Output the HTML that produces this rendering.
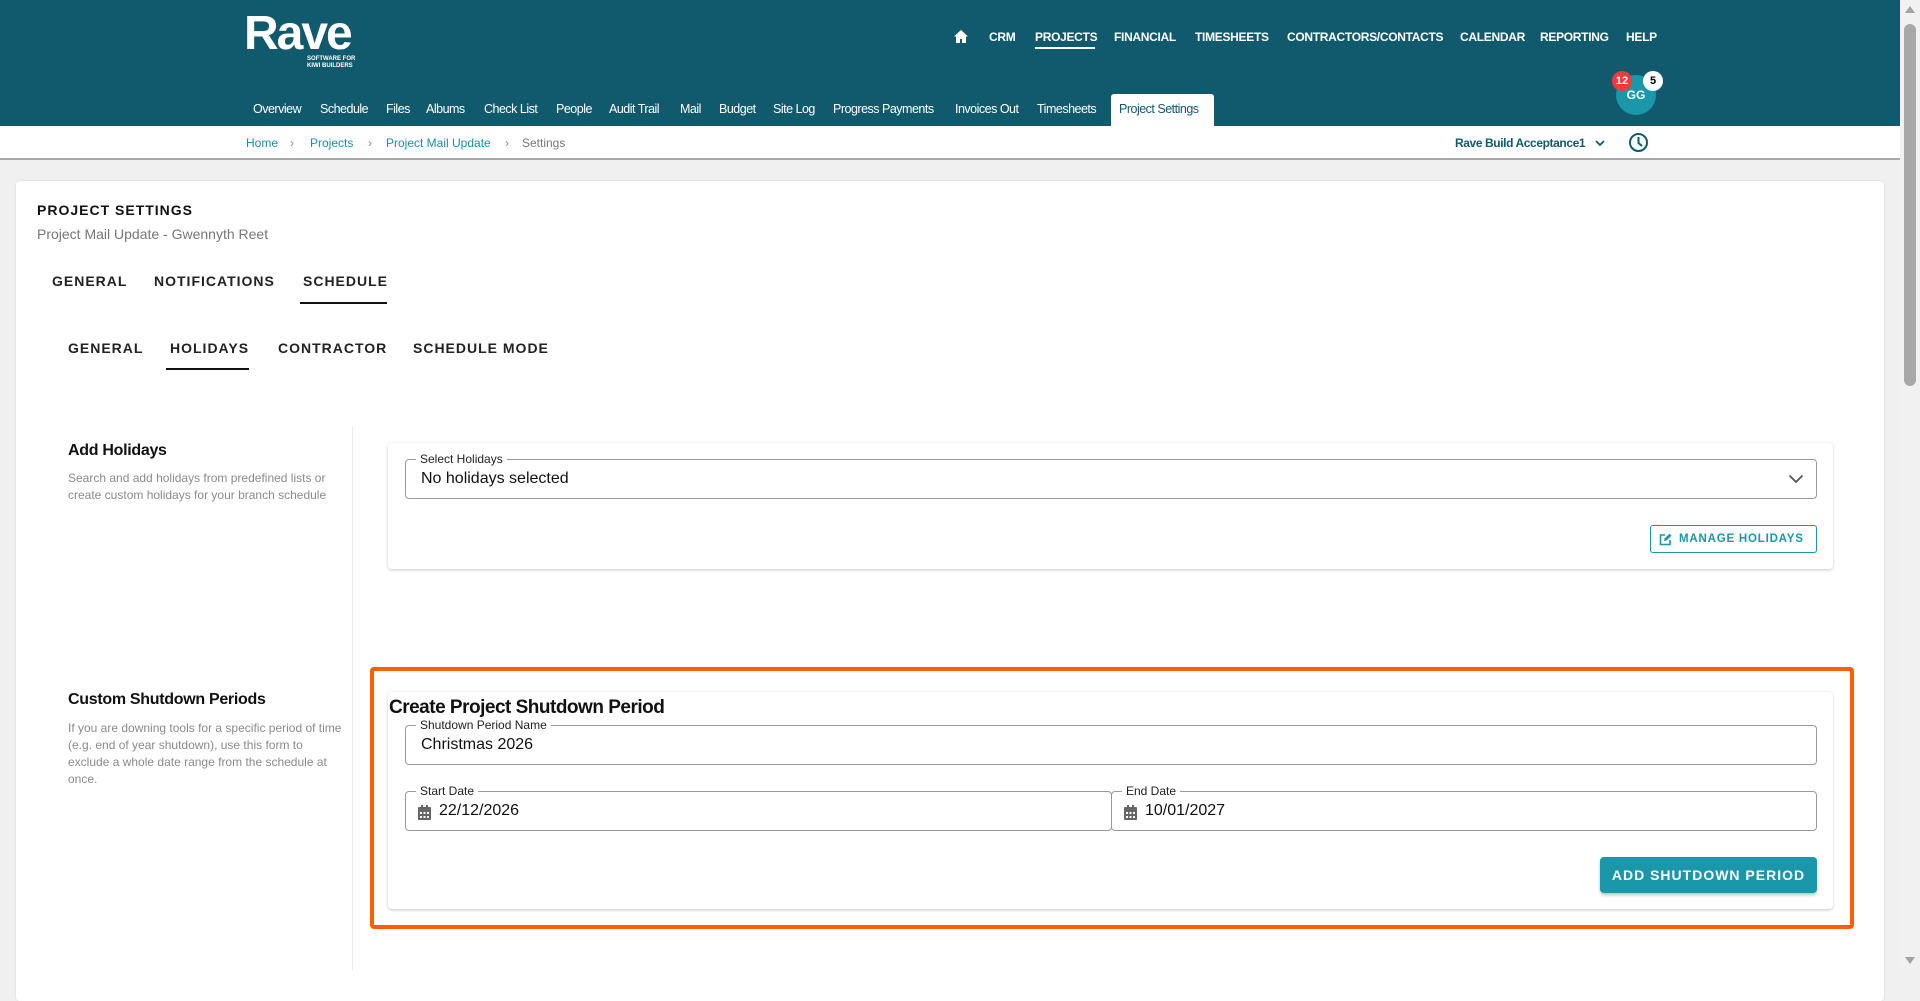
<!DOCTYPE html>
<html><head><meta charset="utf-8"><style>
*{margin:0;padding:0;box-sizing:border-box}
body{width:1920px;height:970px;overflow:hidden;background:#f0f0f0;font-family:"Liberation Sans",Arial,sans-serif;position:relative}
.a{position:absolute;white-space:nowrap}
#hdr{position:absolute;left:0;top:0;width:1900px;height:126px;background:#115a6d}
.tn{position:absolute;top:30px;color:#fff;font-weight:bold;font-size:12px;letter-spacing:-0.3px}
.sn{position:absolute;top:102px;color:#fff;font-size:12.5px;letter-spacing:-0.5px}
#bc{position:absolute;left:0;top:126px;width:1900px;height:34px;background:#fff;border-bottom:2px solid #a8a8a8}
.bcl{position:absolute;top:10px;font-size:12px;color:#1a8fa5}
.card{position:absolute;background:#fff;border-radius:4px;box-shadow:0 1px 3px rgba(0,0,0,.22)}
.tab{position:absolute;font-size:14px;font-weight:bold;letter-spacing:1px;color:#222}
.fld{position:absolute;border:1px solid #9a9a9a;border-radius:4px;background:#fff}
.lbl{position:absolute;top:-8px;left:10px;background:#fff;padding:0 4px;font-size:12px;color:#222;line-height:14px}
.val{position:absolute;left:15px;top:10px;font-size:16px;color:#111}
.desc{font-size:12px;color:#8a8a8a;line-height:17px}
</style></head><body>
<div id="hdr">
 <div class="a" style="left:244px;top:10px;color:#fff;font-size:48px;font-weight:bold;letter-spacing:-2px;line-height:48px">Rave</div>
 <div class="a" style="left:307px;top:56px;color:#fff;font-size:6px;font-weight:bold;line-height:7px">SOFTWARE FOR<br>KIWI BUILDERS</div>
 <svg class="a" style="left:954px;top:30px" width="14" height="13" viewBox="0 0 14 13"><path d="M7 0L0 6.5h2V13h4V9h2v4h4V6.5h2z" fill="#fff"/></svg>
 <div class="tn" style="left:989px">CRM</div>
 <div class="tn" style="left:1035px">PROJECTS</div>
 <div class="a" style="left:1035px;top:47px;width:60px;height:2px;background:#fff"></div>
 <div class="tn" style="left:1114px">FINANCIAL</div>
 <div class="tn" style="left:1195px">TIMESHEETS</div>
 <div class="tn" style="left:1287px">CONTRACTORS/CONTACTS</div>
 <div class="tn" style="left:1460px">CALENDAR</div>
 <div class="tn" style="left:1540px">REPORTING</div>
 <div class="tn" style="left:1626px">HELP</div>
 <div class="sn" style="left:253px">Overview</div>
 <div class="sn" style="left:320px">Schedule</div>
 <div class="sn" style="left:386px">Files</div>
 <div class="sn" style="left:426px">Albums</div>
 <div class="sn" style="left:484px">Check List</div>
 <div class="sn" style="left:556px">People</div>
 <div class="sn" style="left:609px">Audit Trail</div>
 <div class="sn" style="left:680px">Mail</div>
 <div class="sn" style="left:719px">Budget</div>
 <div class="sn" style="left:773px">Site Log</div>
 <div class="sn" style="left:833px">Progress Payments</div>
 <div class="sn" style="left:955px">Invoices Out</div>
 <div class="sn" style="left:1037px">Timesheets</div>
 <div class="a" style="left:1111px;top:94px;width:103px;height:32px;background:#fff;border-radius:3px 3px 0 0"></div>
 <div class="sn" style="left:1119px;color:#115a6d">Project Settings</div>
 <div class="a" style="left:1616px;top:75px;width:40px;height:40px;border-radius:50%;background:#1a97a8;color:#fff;font-size:12px;font-weight:bold;text-align:center;line-height:40px">GG</div>
 <div class="a" style="left:1612px;top:71px;width:20px;height:20px;border-radius:50%;background:#ee3b3b;color:#fff;font-size:11px;font-weight:bold;text-align:center;line-height:20px">12</div>
 <div class="a" style="left:1643px;top:71px;width:20px;height:20px;border-radius:50%;background:#fff;color:#000;font-size:11px;font-weight:bold;text-align:center;line-height:20px">5</div>
</div>
<div id="bc">
 <div class="bcl" style="left:246px">Home</div>
 <div class="bcl" style="left:290px;color:#888">›</div>
 <div class="bcl" style="left:310px">Projects</div>
 <div class="bcl" style="left:368px;color:#888">›</div>
 <div class="bcl" style="left:386px">Project Mail Update</div>
 <div class="bcl" style="left:505px;color:#888">›</div>
 <div class="bcl" style="left:522px;color:#777">Settings</div>
 <div class="a" style="left:1455px;top:10px;font-size:12px;font-weight:bold;color:#115a6d;letter-spacing:-0.4px">Rave Build Acceptance1</div>
 <svg class="a" style="left:1595px;top:13px" width="10" height="8" viewBox="0 0 10 8"><path d="M1 2l4 4 4-4" stroke="#115a6d" stroke-width="1.8" fill="none"/></svg>
 <svg class="a" style="left:1628px;top:6px" width="21" height="21" viewBox="0 0 21 21"><circle cx="10.5" cy="10.5" r="8.5" stroke="#115a6d" stroke-width="2" fill="none"/><path d="M10.5 5v6l3.5 3" stroke="#115a6d" stroke-width="2" fill="none"/></svg>
</div>
<div class="card" style="left:16px;top:181px;width:1868px;height:820px;box-shadow:0 0 2px rgba(0,0,0,.12)"></div>
<div class="a" style="left:37px;top:202px;font-size:14px;font-weight:bold;letter-spacing:1px;color:#111">PROJECT SETTINGS</div>
<div class="a" style="left:37px;top:226px;font-size:14px;color:#777">Project Mail Update - Gwennyth Reet</div>
<div class="tab" style="left:52px;top:273px">GENERAL</div>
<div class="tab" style="left:154px;top:273px">NOTIFICATIONS</div>
<div class="tab" style="left:303px;top:273px">SCHEDULE</div>
<div class="a" style="left:300px;top:302px;width:87px;height:2px;background:#111"></div>
<div class="tab" style="left:68px;top:340px">GENERAL</div>
<div class="tab" style="left:170px;top:340px">HOLIDAYS</div>
<div class="tab" style="left:278px;top:340px">CONTRACTOR</div>
<div class="tab" style="left:413px;top:340px">SCHEDULE MODE</div>
<div class="a" style="left:166px;top:368px;width:83px;height:2px;background:#111"></div>
<div class="a" style="left:352px;top:426px;width:1px;height:544px;background:#ececec"></div>
<div class="a" style="left:68px;top:442px;font-size:16px;font-weight:bold;color:#111;letter-spacing:-0.3px">Add Holidays</div>
<div class="a desc" style="left:68px;top:470px">Search and add holidays from predefined lists or<br>create custom holidays for your branch schedule</div>
<div class="a" style="left:68px;top:691px;font-size:16px;font-weight:bold;color:#111;letter-spacing:-0.3px">Custom Shutdown Periods</div>
<div class="a desc" style="left:68px;top:720px">If you are downing tools for a specific period of time<br>(e.g. end of year shutdown), use this form to<br>exclude a whole date range from the schedule at<br>once.</div>
<div class="card" style="left:388px;top:443px;width:1445px;height:126px"></div>
<div class="fld" style="left:405px;top:459px;width:1412px;height:40px"><div class="lbl">Select Holidays</div><div class="val">No holidays selected</div>
 <svg class="a" style="right:12px;top:14px" width="16" height="10" viewBox="0 0 16 10"><path d="M1.5 1.5l6.5 6.5 6.5-6.5" stroke="#555" stroke-width="1.8" fill="none"/></svg></div>
<div class="a" style="left:1650px;top:525px;width:167px;height:28px;border:1px solid #1a97a8;border-radius:3px;color:#1a97a8;font-size:11.5px;font-weight:bold;letter-spacing:0.8px;line-height:26px;padding-left:28px">MANAGE HOLIDAYS
 <svg class="a" style="left:8px;top:7px" width="13" height="13" viewBox="0 0 13 13"><path d="M6 2H1.5v9.5H11V7" stroke="#1a97a8" stroke-width="1.6" fill="none"/><path d="M5 8l.5-2.5L10.5.8l2 2L7.5 7.5z" fill="#1a97a8"/></svg></div>
<div class="a" style="left:370px;top:667px;width:1484px;height:262px;border:4px solid #ff5f00;border-radius:4px"></div>
<div class="card" style="left:388px;top:692px;width:1445px;height:217px"></div>
<div class="a" style="left:389px;top:697px;font-size:19px;font-weight:bold;color:#111;letter-spacing:-0.5px">Create Project Shutdown Period</div>
<div class="fld" style="left:405px;top:725px;width:1412px;height:40px"><div class="lbl">Shutdown Period Name</div><div class="val">Christmas 2026</div></div>
<div class="fld" style="left:405px;top:791px;width:707px;height:40px"><div class="lbl">Start Date</div>
 <svg class="a" style="left:12px;top:13px" width="13" height="15" viewBox="0 0 13 15"><rect x="0" y="2" width="13" height="13" rx="1" fill="#666"/><rect x="3" y="0" width="2" height="4" fill="#666"/><rect x="8" y="0" width="2" height="4" fill="#666"/><g fill="#fff"><rect x="2" y="7" width="2" height="2"/><rect x="5.5" y="7" width="2" height="2"/><rect x="9" y="7" width="2" height="2"/><rect x="2" y="11" width="2" height="2"/><rect x="5.5" y="11" width="2" height="2"/><rect x="9" y="11" width="2" height="2"/></g></svg>
 <div class="val" style="left:33px">22/12/2026</div></div>
<div class="fld" style="left:1111px;top:791px;width:706px;height:40px"><div class="lbl">End Date</div>
 <svg class="a" style="left:12px;top:13px" width="13" height="15" viewBox="0 0 13 15"><rect x="0" y="2" width="13" height="13" rx="1" fill="#666"/><rect x="3" y="0" width="2" height="4" fill="#666"/><rect x="8" y="0" width="2" height="4" fill="#666"/><g fill="#fff"><rect x="2" y="7" width="2" height="2"/><rect x="5.5" y="7" width="2" height="2"/><rect x="9" y="7" width="2" height="2"/><rect x="2" y="11" width="2" height="2"/><rect x="5.5" y="11" width="2" height="2"/><rect x="9" y="11" width="2" height="2"/></g></svg>
 <div class="val" style="left:33px">10/01/2027</div></div>
<div class="a" style="left:1600px;top:857px;width:217px;height:36px;background:#1a97a8;border-radius:4px;box-shadow:0 2px 3px rgba(0,0,0,.25);color:#fff;font-size:14px;font-weight:bold;letter-spacing:1px;text-align:center;line-height:36px">ADD SHUTDOWN PERIOD</div>
<div class="a" style="left:1900px;top:0;width:20px;height:970px;background:#f1f1f1"></div>
<svg class="a" style="left:1905px;top:6px" width="10" height="7" viewBox="0 0 10 7"><path d="M0 7L5 0l5 7z" fill="#a3a3a3"/></svg>
<div class="a" style="left:1904px;top:24px;width:12px;height:362px;background:#a8a8a8;border-radius:6px"></div>
<svg class="a" style="left:1905px;top:957px" width="10" height="7" viewBox="0 0 10 7"><path d="M0 0L5 7l5-7z" fill="#a3a3a3"/></svg>
</body></html>
